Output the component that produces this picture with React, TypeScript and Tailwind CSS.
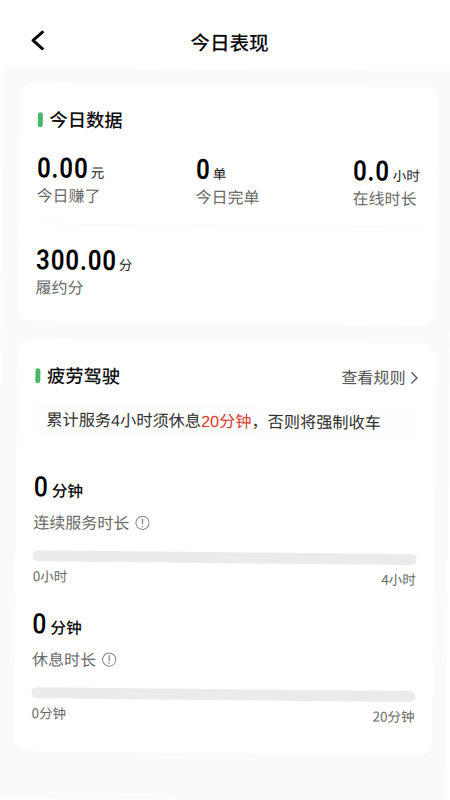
import React from 'react';

const cjk = "font-['Noto_Sans_CJK_SC',sans-serif]";

function Info() {
  return (
    <svg className="ml-[6px] h-[15px] w-[15px] shrink-0" viewBox="0 0 15 15" fill="none" stroke="#858585" strokeWidth="1">
      <circle cx="7.5" cy="7.5" r="6.6" />
      <path d="M7.5 3.2V8.9M7.5 10.3V11.7" strokeWidth="1.3" />
    </svg>
  );
}

function Heading({ children }: { children: React.ReactNode }) {
  return (
    <div className="flex h-6 items-center">
      <span className="ml-[0.4px] h-[15px] w-[5px] rounded-full bg-[#4bb768]" />
      <h2 className="-mt-[2px] ml-[6.8px] text-[18.3px] font-medium leading-6 text-[#0c0c0c]">{children}</h2>
    </div>
  );
}

function Stat({ value, unit, label, width }: { value: string; unit: string; label: string; width: string }) {
  return (
    <div>
      <div className="flex h-8 items-baseline pt-[2.8px]">
        <span className={`${width} origin-left scale-x-[0.86] whitespace-nowrap pl-[0.8px] font-[Roboto] text-[27.8px] font-semibold leading-7 tracking-[1.1px] text-black`}>
          {value}
        </span>
        <span className="text-[13.5px] leading-none text-[#1c1c1c]">{unit}</span>
      </div>
      <div className="mt-px h-5 text-[16px] leading-5 text-[#6a6a6a]">{label}</div>
    </div>
  );
}

function Duration({ label, start, end }: { label: string; start: string; end: string }) {
  return (
    <div className="h-[137px]">
      <div className="flex h-8 items-baseline pt-[3.8px]">
        <span className="w-[18px] origin-left scale-x-[0.88] pl-[0.5px] font-[Roboto] text-[28px] font-medium leading-7 text-black">0</span>
        <span className="text-[15.7px] font-medium leading-none text-[#0c0c0c]">分钟</span>
      </div>
      <div className="mt-[10px] flex h-5 items-center text-[16px] leading-5 text-[#6a6a6a]">
        <span className="-mt-px">{label}</span>
        <Info />
      </div>
      <div className="mt-[18px] h-[11.6px] w-[384px] rounded-full bg-[#ebebeb]" />
      <div className="mt-[3.6px] flex h-5 w-[383px] justify-between text-[13.5px] leading-5 text-[#6a6a6a]">
        <span>{start}</span>
        <span>{end}</span>
      </div>
    </div>
  );
}

export default function App() {
  return (
    <div className={`h-[800px] w-[450px] overflow-hidden bg-white ${cjk}`}>
      <div className="ml-[4.2px] flex h-[798px] w-[449px] origin-top-left rotate-[0.55deg] flex-col bg-[#fafafa]">
        <header className="grid h-[67px] shrink-0 grid-cols-[62px_1fr_59px] items-center bg-white pt-[13px]">
          <svg className="ml-[27px] h-[22px] w-[16px]" viewBox="0 0 16 22" fill="none" stroke="#0a0a0a" strokeWidth="3" strokeLinecap="round" strokeLinejoin="round">
            <path d="M11.8 2.8L2.4 11L11.8 19.2" />
          </svg>
          <h1 className="text-center text-[19.6px] font-medium leading-7 text-[#0a0a0a]">今日表现</h1>
        </header>

        <section className="ml-[16.8px] mt-[15.5px] h-[238.5px] w-[418.5px] shrink-0 rounded-[14px] bg-white px-[17.6px] pt-[24.5px]">
          <Heading>今日数据</Heading>
          <div className="mt-[20px] flex h-[72.5px] border-b border-[#f8f8f8]">
            <div className="w-[159px]"><Stat value="0.00" unit="元" label="今日赚了" width="w-[54px]" /></div>
            <div className="w-[157px]"><Stat value="0" unit="单" label="今日完单" width="w-[17px]" /></div>
            <div className="whitespace-nowrap"><Stat value="0.0" unit="小时" label="在线时长" width="w-[40px]" /></div>
          </div>
          <div className="mt-[19.5px]"><Stat value="300.00" unit="分" label="履约分" width="w-[83px]" /></div>
        </section>

        <section className="ml-[16.8px] mt-[17.5px] h-[412px] w-[418.5px] shrink-0 rounded-[14px] bg-white px-[17.6px] pt-[24.5px]">
          <div className="flex items-center justify-between">
            <Heading>疲劳驾驶</Heading>
            <div className="-mr-[1.5px] flex items-center text-[16.1px] leading-6 text-[#555]">
              <span className="-mt-[4px]">查看规则</span>
              <svg className="-mt-[3px] ml-[4px] h-[14px] w-[10px]" viewBox="0 0 10 14" fill="none" stroke="#555" strokeWidth="1.3">
                <path d="M2 1.4L7.6 7L2 12.6" />
              </svg>
            </div>
          </div>
          <div className="mt-[14.5px] h-[34px] w-[381px] whitespace-nowrap bg-[#fefefe] pl-[12px] font-['Liberation_Sans','Noto_Sans_CJK_SC',sans-serif] text-[16.2px] leading-[34px] text-[#303030]">
            累计服务4小时须休息<span className="text-[#d93a32]">20分钟</span>，否则将强制收车
          </div>
          <div className="mt-[34px]">
            <Duration label="连续服务时长" start="0小时" end="4小时" />
            <Duration label="休息时长" start="0分钟" end="20分钟" />
          </div>
        </section>
      </div>
    </div>
  );
}
